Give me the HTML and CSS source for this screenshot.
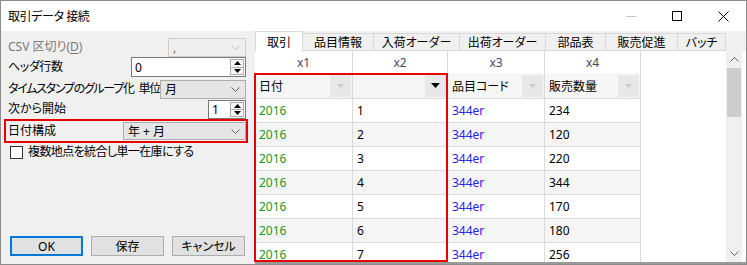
FILE: index.html
```html
<!DOCTYPE html>
<html lang="ja">
<head>
<meta charset="utf-8">
<title>取引データ 接続</title>
<link rel="stylesheet" href="styles.css">
</head>
<body>
<div class="window">
  <div class="titlebar">
    <div class="title">取引データ 接続</div>
    <div class="caps">
      <div class="cap"><svg width="10" height="1" viewBox="0 0 10 1"><rect width="10" height="1" fill="#c6c6c6"/></svg></div>
      <div class="cap"><svg width="10" height="10" viewBox="0 0 10 10"><rect x="0.5" y="0.5" width="9" height="9" fill="none" stroke="#000"/></svg></div>
      <div class="cap"><svg width="11" height="11" viewBox="0 0 11 11"><path d="M0.5,0.5L10.5,10.5M10.5,0.5L0.5,10.5" stroke="#000" stroke-width="1"/></svg></div>
    </div>
  </div>
  <div class="body">
    <div class="left">
      <div class="row r-csv">
        <span class="label disabled">CSV 区切り(<u>D</u>)</span>
        <div class="combo combo-disabled w-csv"><span class="combo-text">,</span><svg class="chev" width="9" height="5" viewBox="0 0 9 5"><polyline points="0.5,0.5 4.5,4.5 8.5,0.5" fill="none" stroke="#c4c4c4"/></svg></div>
      </div>
      <div class="row r-hdr">
        <span class="label tight1">ヘッダ行数</span>
        <div class="spin w-hdr"><span class="spin-text">0</span>
          <div class="spin-btns">
            <div class="spin-half"><svg width="7" height="4" viewBox="0 0 7 4"><polygon points="3.5,0 7,4 0,4" fill="#000"/></svg></div>
            <div class="spin-half"><svg width="7" height="4" viewBox="0 0 7 4"><polygon points="0,0 7,0 3.5,4" fill="#000"/></svg></div>
          </div>
        </div>
      </div>
      <div class="row r-ts">
        <span class="label tight3">タイムスタンプのグループ化<span class="sp"></span>単位</span>
        <div class="combo w-ts"><span class="combo-text">月</span><svg class="chev" width="9" height="5" viewBox="0 0 9 5"><polyline points="0.5,0.5 4.5,4.5 8.5,0.5" fill="none" stroke="#606060"/></svg></div>
      </div>
      <div class="row r-next">
        <span class="label">次から開始</span>
        <div class="spin w-next"><span class="spin-text">1</span>
          <div class="spin-btns">
            <div class="spin-half"><svg width="7" height="4" viewBox="0 0 7 4"><polygon points="3.5,0 7,4 0,4" fill="#000"/></svg></div>
            <div class="spin-half"><svg width="7" height="4" viewBox="0 0 7 4"><polygon points="0,0 7,0 3.5,4" fill="#000"/></svg></div>
          </div>
        </div>
      </div>
      <div class="row r-date">
        <span class="label">日付構成</span>
        <div class="combo w-date"><span class="combo-text">年 + 月</span><svg class="chev" width="9" height="5" viewBox="0 0 9 5"><polyline points="0.5,0.5 4.5,4.5 8.5,0.5" fill="none" stroke="#606060"/></svg></div>
      </div>
      <div class="row r-chk">
        <span class="checkbox"></span>
        <span class="label tight2">複数地点を統合し単一在庫にする</span>
      </div>
      <div class="btns">
        <div class="btn btn-default">OK</div>
        <div class="btn">保存</div>
        <div class="btn">キャンセル</div>
      </div>
    </div>
    <div class="right">
      <div class="tabs">
        <div class="tab tab-sel t48">取引</div>
        <div class="tab t71">品目情報</div>
        <div class="tab t86">入荷オーダー</div>
        <div class="tab t86">出荷オーダー</div>
        <div class="tab t60">部品表</div>
        <div class="tab t72">販売促進</div>
        <div class="tab t48">バッチ</div>
      </div>
      <div class="grid">
        <div class="table">
          <div class="tr h1">
            <div class="td c1">x1</div><div class="td c2">x2</div><div class="td c3">x3</div><div class="td c4">x4</div>
          </div>
          <div class="tr h2 dots">
            <div class="td c1"><span>日付</span><span class="dd"><svg width="7" height="4" viewBox="0 0 7 4"><polygon points="0,0 7,0 3.5,4" fill="#c8c8c8"/></svg></span></div>
            <div class="td c2"><span></span><span class="dd"><svg width="9" height="5" viewBox="0 0 9 5"><polygon points="0,0 9,0 4.5,5" fill="#000"/></svg></span></div>
            <div class="td c3"><span>品目コード</span><span class="dd"><svg width="7" height="4" viewBox="0 0 7 4"><polygon points="0,0 7,0 3.5,4" fill="#c8c8c8"/></svg></span></div>
            <div class="td c4"><span>販売数量</span><span class="dd"><svg width="7" height="4" viewBox="0 0 7 4"><polygon points="0,0 7,0 3.5,4" fill="#c8c8c8"/></svg></span></div>
          </div>
          <div class="tr dr"><div class="td c1 g">2016</div><div class="td c2">1</div><div class="td c3 b">344er</div><div class="td c4">234</div></div>
          <div class="tr dr dots"><div class="td c1 g">2016</div><div class="td c2">2</div><div class="td c3 b">344er</div><div class="td c4">120</div></div>
          <div class="tr dr"><div class="td c1 g">2016</div><div class="td c2">3</div><div class="td c3 b">344er</div><div class="td c4">220</div></div>
          <div class="tr dr dots"><div class="td c1 g">2016</div><div class="td c2">4</div><div class="td c3 b">344er</div><div class="td c4">344</div></div>
          <div class="tr dr"><div class="td c1 g">2016</div><div class="td c2">5</div><div class="td c3 b">344er</div><div class="td c4">170</div></div>
          <div class="tr dr dots"><div class="td c1 g">2016</div><div class="td c2">6</div><div class="td c3 b">344er</div><div class="td c4">180</div></div>
          <div class="tr dr"><div class="td c1 g">2016</div><div class="td c2">7</div><div class="td c3 b">344er</div><div class="td c4">256</div></div>
        </div>
        <div class="filler"></div>
        <div class="vscroll">
          <div class="arrow"><svg width="9" height="5" viewBox="0 0 9 5"><polyline points="0.5,4.5 4.5,0.5 8.5,4.5" fill="none" stroke="#606060"/></svg></div>
          <div class="thumb"></div>
          <div class="track"></div>
          <div class="arrow"><svg width="9" height="5" viewBox="0 0 9 5"><polyline points="0.5,0.5 4.5,4.5 8.5,0.5" fill="none" stroke="#606060"/></svg></div>
        </div>
        <div class="edge"></div>
        <div class="redbox"></div>
      </div>
    </div>
  </div>
</div>
</body>
</html>
```
FILE: styles.css
```css
body {
  margin: 0;
  font-family: "Noto Sans", "Noto Sans CJK JP", sans-serif;
  font-size: 12px;
  font-feature-settings: "palt";
  color: #000;
}

.window {
  width: 747px;
  height: 265px;
  box-sizing: border-box;
  border: 1px solid #8c8c8c;
  display: flex;
  flex-direction: column;
  background: #f0f0f0;
  overflow: hidden;
}

.titlebar {
  height: 30px;
  flex: 0 0 30px;
  background: #fff;
  display: flex;
  align-items: center;
}

.title {
  padding-left: 7px;
  font-size: 12px;
  letter-spacing: -0.4px;
}

.caps {
  margin-left: auto;
  display: flex;
  height: 100%;
}

.cap {
  width: 46px;
  display: flex;
  align-items: center;
  justify-content: center;
}

.body {
  flex: 1;
  display: flex;
  min-height: 0;
}

/* Left form */
.left {
  width: 254px;
  flex: 0 0 254px;
  box-sizing: border-box;
  padding: 6px 9px 8px 7px;
  display: flex;
  flex-direction: column;
}

.row {
  display: flex;
  align-items: center;
  box-sizing: border-box;
}

.label {
  flex: 1;
  min-width: 0;
  white-space: nowrap;
  line-height: 16px;
}

.label.tight1 { letter-spacing: -0.4px; }
.label.tight2 { letter-spacing: -0.6px; }
.label.tight3 { letter-spacing: -1.3px; }

.sp {
  display: inline-block;
  width: 5px;
}

.label.disabled {
  color: #7a7a7a;
}

.label u {
  text-decoration-thickness: 1px;
  text-underline-offset: 2px;
}

.r-csv { height: 20px; }
.r-hdr { height: 20px; }
.r-ts { height: 20px; margin-top: 2px; }
.r-next { height: 20px; }
.r-date {
  height: 24px;
  border: 2px solid #e60000;
  margin: 0 -2px 0 -4px;
  padding-left: 2px;
}
.r-chk { height: 16px; margin-top: 1px; }

.combo {
  box-sizing: border-box;
  height: 19px;
  flex: 0 0 auto;
  border: 1px solid #adadad;
  background: #e5e5e5;
  display: flex;
  align-items: center;
  padding: 0 5px 0 4px;
}

.combo-text {
  flex: 1;
  white-space: nowrap;
}

.combo-disabled {
  border-color: #cccccc;
  background: #efefef;
  color: #6d6d6d;
}

.combo-disabled .combo-text {
  line-height: 10px;
}

.w-csv { width: 78px; margin-top: 1px; }
.w-ts { width: 86px; }
.w-date { width: 123px; height: 18px; }

.spin {
  box-sizing: border-box;
  height: 20px;
  flex: 0 0 auto;
  border: 1px solid #7a7a7a;
  background: #fff;
  display: flex;
  align-items: center;
  padding: 1px 1px 1px 3px;
}

.w-hdr { width: 115px; }
.w-next { width: 38px; height: 19px; }

.spin-text {
  flex: 1;
}

.spin-btns {
  width: 14px;
  height: 100%;
  display: flex;
  flex-direction: column;
  border: 1px solid #adadad;
  box-sizing: border-box;
  background: #f7f7f7;
}

.spin-half {
  flex: 1;
  display: flex;
  align-items: center;
  justify-content: center;
}

.spin-half + .spin-half {
  border-top: 1px solid #adadad;
}

.checkbox {
  width: 13px;
  height: 13px;
  box-sizing: border-box;
  border: 1px solid #333;
  background: #fff;
  margin: 0 5px 0 2px;
  flex: 0 0 13px;
}

.btns {
  margin-top: auto;
  display: flex;
  gap: 8px;
  padding-left: 2px;
}

.btn {
  width: 73px;
  height: 20px;
  box-sizing: border-box;
  border: 1px solid #adadad;
  background: #e1e1e1;
  display: flex;
  align-items: center;
  justify-content: center;
}

.btn-default {
  border: 2px solid #0078d7;
}

/* Right side */
.right {
  flex: 1;
  display: flex;
  flex-direction: column;
  min-width: 0;
}

.tabs {
  height: 20px;
  flex: 0 0 20px;
  display: flex;
  align-items: flex-end;
}

.tab {
  height: 18px;
  box-sizing: border-box;
  border: 1px solid #d9d9d9;
  border-left: none;
  background: #f0f0f0;
  display: flex;
  align-items: center;
  justify-content: center;
  white-space: nowrap;
}

.tab-sel {
  height: 20px;
  background: #fff;
  border-left: 1px solid #d9d9d9;
  border-bottom: none;
}

.t48 { width: 48px; }
.t60 { width: 60px; }
.t71 { width: 71px; }
.t72 { width: 72px; }
.t86 { width: 86px; }

.grid {
  flex: 1;
  display: flex;
  background: #fff;
  position: relative;
  border-bottom: 2px solid #9a9a9a;
  min-height: 0;
}

.table {
  width: 386px;
  display: flex;
  flex-direction: column;
  overflow: hidden;
}

.tr {
  display: flex;
  flex: 0 0 auto;
}

.td {
  box-sizing: border-box;
  border-right: 1px solid #dadada;
  display: flex;
  align-items: center;
  padding-left: 4px;
  white-space: nowrap;
  overflow: hidden;
}

.c1 { width: 98px; }
.c2 { width: 95px; }
.c3 { width: 97px; }
.c4 { width: 96px; }

.h1 .td {
  height: 22px;
  justify-content: center;
  padding-left: 0;
  color: #3c4a6e;
}

.h2 .td {
  height: 26px;
  border-bottom: 1px solid #dadada;
  justify-content: space-between;
}

.dd {
  width: 21px;
  height: 22px;
  margin-right: 1px;
  background: #e8e8e8;
  display: flex;
  align-items: center;
  justify-content: center;
}

.dr .td {
  height: 24px;
  border-bottom: 1px solid #dadada;
}

.dots .td {
  background-color: #f6f6f6;
  background-image: repeating-conic-gradient(#efefef 0 25%, #fdfdfd 0 50%);
  background-size: 2px 2px;
}

.g { color: #229622; }
.b { color: #2424e6; }

.filler {
  flex: 1;
}

.vscroll {
  width: 16px;
  flex: 0 0 16px;
  background: #f0f0f0;
  display: flex;
  flex-direction: column;
}

.arrow {
  height: 17px;
  display: flex;
  align-items: center;
  justify-content: center;
}

.thumb {
  height: 49px;
  margin: 0 1px;
  background: #cdcdcd;
}

.track {
  flex: 1;
}

.edge {
  width: 4px;
  flex: 0 0 4px;
}

.redbox {
  position: absolute;
  left: -1px;
  top: 22px;
  width: 194px;
  bottom: 0;
  box-sizing: border-box;
  border: 2px solid #e60000;
  pointer-events: none;
}
```
